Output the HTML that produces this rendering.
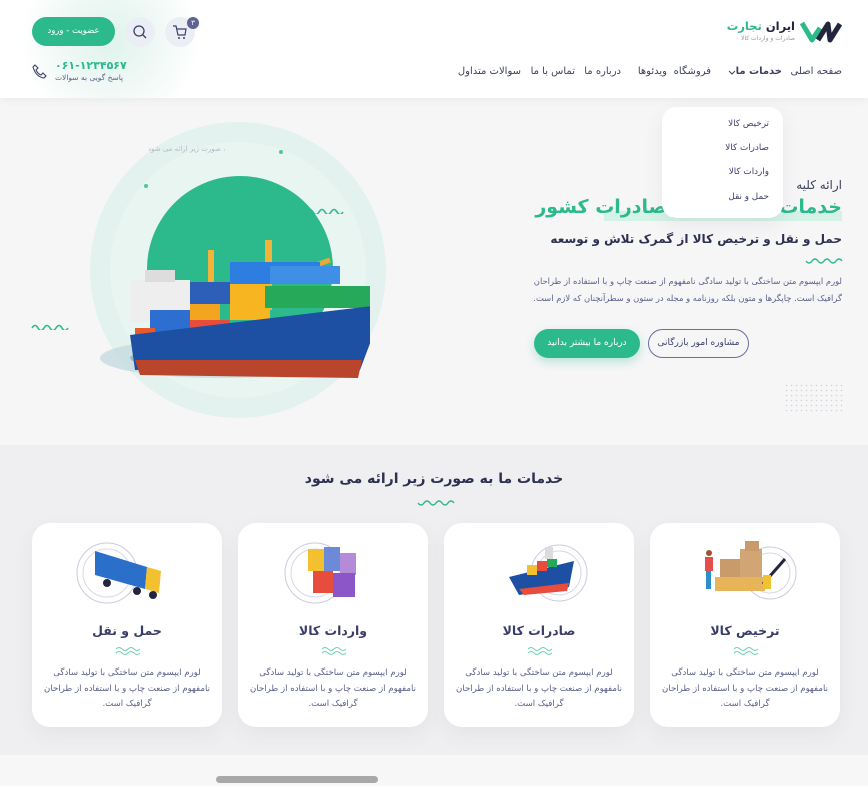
<!DOCTYPE html>
<html><head><meta charset="utf-8"><style>
*{margin:0;padding:0;box-sizing:border-box}
body{width:868px;height:786px;overflow:hidden;background:#f6f6f7;font-family:"DejaVu Sans","Liberation Sans",sans-serif;color:#3c3f5e;position:relative}
.a{position:absolute}
.t{white-space:nowrap}
.r{direction:rtl}
header{position:absolute;left:0;top:0;width:868px;height:98px;background:#fff;box-shadow:0 2px 8px rgba(0,0,0,.05)}
.nav{font-size:10px;color:#3c3f5e;top:66px}
.card{position:absolute;top:523px;width:190px;height:204px;background:#fff;border-radius:18px;box-shadow:0 8px 20px rgba(60,60,90,.06);text-align:center;direction:rtl}
.card h3{position:absolute;top:100px;width:100%;font-size:12.5px;color:#3a3d6b;font-weight:bold}
.card p{position:absolute;top:143px;left:12px;right:12px;font-size:8.6px;line-height:15.5px;color:#5a5f8a}
.card svg.w{position:absolute;top:123px;left:83px}
.card svg.ill{position:absolute;top:16px;left:35px}
</style></head><body>
<!-- hero background shapes -->
<div class="a" style="left:90px;top:122px;width:296px;height:296px;border-radius:50%;background:#e3f2ee"></div>
<div class="a" style="left:110px;top:142px;width:256px;height:256px;border-radius:50%;background:#e9f5f1"></div>
<div class="a" style="left:147px;top:176px;width:186px;height:186px;border-radius:50%;background:#2cb98c"></div>
<div class="a t r" style="left:148px;top:145px;font-size:7px;color:#b5b8c4">، صورت زیر ارائه می شود</div>
<div class="a" style="left:279px;top:150px;width:4px;height:4px;border-radius:50%;background:#4fc79d"></div>
<div class="a" style="left:144px;top:184px;width:4px;height:4px;border-radius:50%;background:#4fc79d"></div>
<svg class="a" style="left:306px;top:206px" width="38" height="8"><path d="M1 6 Q4 1 7 6 T13 6 T19 6 T25 6 T31 6 T37 6" fill="none" stroke="#2cb98c" stroke-width="1.6"/></svg>
<svg class="a" style="left:31px;top:322px" width="38" height="8"><path d="M1 6 Q4 1 7 6 T13 6 T19 6 T25 6 T31 6 T37 6" fill="none" stroke="#2cb98c" stroke-width="1.6"/></svg>
<!-- ship -->
<svg class="a" style="left:90px;top:210px" width="280" height="180">
<ellipse cx="130" cy="148" rx="120" ry="20" fill="#bfd9de" opacity=".7"/>
<ellipse cx="130" cy="148" rx="90" ry="12" fill="#6ea4b3" opacity=".6"/>
<rect x="40" y="70" width="60" height="42" fill="#eee"/>
<rect x="55" y="60" width="30" height="12" fill="#ddd"/>
<rect x="118" y="40" width="6" height="60" fill="#f0b43c"/>
<rect x="175" y="30" width="7" height="70" fill="#f0b43c"/>
<path d="M185 70 L240 50" stroke="#e8a83a" stroke-width="5"/>
<rect x="60" y="100" width="40" height="40" fill="#2d6fd1"/>
<rect x="45" y="118" width="20" height="22" fill="#e85a2c"/>
<rect x="100" y="92" width="30" height="18" fill="#f3a51f"/>
<rect x="100" y="72" width="40" height="22" fill="#2e5fb8"/>
<rect x="140" y="72" width="40" height="38" fill="#f6b521"/>
<rect x="140" y="52" width="90" height="22" fill="#2e7de0"/>
<rect x="180" y="56" width="70" height="18" fill="#3f8fe6"/>
<rect x="175" y="76" width="110" height="22" fill="#27a95a"/>
<rect x="100" y="110" width="40" height="20" fill="#e74c3c"/>
<path d="M40 125 L290 95 L285 120 L270 160 L45 160 Z" fill="#1d4fa3"/>
<path d="M45 150 L272 150 L268 168 L50 165 Z" fill="#b8452c"/>
</svg>
<!-- right hero text -->
<div class="a t r" style="right:26px;top:178px;font-size:12px;color:#3c3f5e">ارائه کلیه</div>
<div class="a" style="left:604px;top:211px;width:238px;height:10px;background:#d4f2e6"></div>
<div class="a t r" style="right:26px;top:196px;font-size:19px;font-weight:bold;color:#2cb98c">خدمات بازرگانی و صادرات کشور</div>
<div class="a t r" style="right:26px;top:232px;font-size:12px;font-weight:bold;color:#2d3050">حمل و نقل و ترخیص کالا از گمرک تلاش و توسعه</div>
<svg class="a" style="left:805px;top:257px" width="38" height="8"><path d="M1 4 Q4 8 7 4 T13 4 T19 4 T25 4 T31 4 T37 4" fill="none" stroke="#2cb98c" stroke-width="1.4"/></svg>
<div class="a r t" style="right:26px;top:273px;font-size:8.4px;line-height:17px;color:#5a5f8a">لورم ایپسوم متن ساختگی با تولید سادگی نامفهوم از صنعت چاپ و با استفاده از طراحان<br>گرافیک است. چاپگرها و متون بلکه روزنامه و مجله در ستون و سطرآنچنان که لازم است.</div>
<div class="a t r" style="left:534px;top:329px;width:106px;height:29px;border-radius:15px;background:#2cb98c;color:#fff;font-size:9px;text-align:center;line-height:29px;box-shadow:0 4px 10px rgba(44,185,140,.3)">درباره ما بیشتر بدانید</div>
<div class="a t r" style="left:648px;top:329px;width:101px;height:29px;border-radius:15px;border:1px solid #6a6f9e;color:#3c3f6e;font-size:9px;text-align:center;line-height:27px">مشاوره امور بازرگانی</div>
<svg class="a" style="left:785px;top:384px" width="58" height="30"><defs><pattern id="d" width="5" height="5" patternUnits="userSpaceOnUse"><circle cx="1.5" cy="1.5" r=".8" fill="#d0d2dc"/></pattern></defs><rect width="58" height="30" fill="url(#d)"/></svg>
<!-- header -->
<header>
<div class="a" style="left:0;top:0;width:230px;height:98px;background:radial-gradient(circle at 110px 40px,#dff3ec 0,#eef8f5 45px,rgba(255,255,255,0) 90px)"></div>
<svg class="a" style="left:800px;top:20px" width="44" height="24"><path d="M2 3 L12 20 L20 8" fill="none" stroke="#2cb98c" stroke-width="5" stroke-linejoin="round"/><path d="M18 20 L28 4 L30 20 L40 4" fill="none" stroke="#23253f" stroke-width="5" stroke-linejoin="round"/></svg>
<div class="a t r" style="right:73px;top:19px;font-size:11.5px;font-weight:bold;color:#23253f">ایران <span style="color:#2cb98c">تجارت</span></div>
<div class="a t r" style="right:73px;top:35px;font-size:6px;color:#999">صادرات و واردات کالا</div>
<div class="a t r nav" style="right:26px">صفحه اصلی</div>
<div class="a t r nav" style="right:86px;font-weight:bold">خدمات ما</div>
<svg class="a" style="left:728px;top:70px" width="8" height="6"><path d="M1 1 L4 4 L7 1" fill="none" stroke="#3c3f5e" stroke-width="1"/></svg>
<div class="a t r nav" style="right:157px">فروشگاه</div>
<div class="a t r nav" style="right:201px">ویدئوها</div>
<div class="a t r nav" style="right:247px">درباره ما</div>
<div class="a t r nav" style="right:293px">تماس با ما</div>
<div class="a t r nav" style="right:347px">سوالات متداول</div>
<div class="a t r" style="left:32px;top:17px;width:83px;height:29px;border-radius:15px;background:#2cb98c;color:#fff;font-size:8.5px;text-align:center;line-height:29px">عضویت - ورود</div>
<div class="a" style="left:125px;top:17px;width:30px;height:30px;border-radius:50%;background:#eceef6"></div>
<svg class="a" style="left:132px;top:24px" width="16" height="16"><circle cx="7" cy="7" r="5" fill="none" stroke="#3c3f6e" stroke-width="1.3"/><path d="M11 11 L14 14" stroke="#3c3f6e" stroke-width="1.3"/></svg>
<div class="a" style="left:165px;top:17px;width:30px;height:30px;border-radius:50%;background:#eceef6"></div>
<svg class="a" style="left:172px;top:24px" width="16" height="16"><path d="M1 2 H4 L6 11 H13 L14 5 H5" fill="none" stroke="#3c3f6e" stroke-width="1.2"/><circle cx="7" cy="14" r="1" fill="#3c3f6e"/><circle cx="12" cy="14" r="1" fill="#3c3f6e"/></svg>
<div class="a t" style="left:187px;top:17px;width:12px;height:12px;border-radius:50%;background:#5f6394;color:#fff;font-size:7px;text-align:center;line-height:12px">۳</div>
<div class="a t" style="left:55px;top:59px;font-size:11px;font-weight:bold;color:#2cb98c">۰۶۱-۱۲۳۴۵۶۷</div>
<div class="a t r" style="left:55px;top:73px;font-size:7.5px;color:#5a5f8a">پاسخ گویی به سوالات</div>
<svg class="a" style="left:32px;top:64px" width="15" height="15"><path d="M3 1 L6 4 L4 6 Q6 10 9 11 L11 9 L14 12 L12 14 Q4 13 1 3 Z" fill="none" stroke="#3c3f6e" stroke-width="1.1"/></svg>
</header>
<!-- dropdown -->
<div class="a r" style="left:662px;top:107px;width:121px;height:111px;background:#fff;border-radius:14px;box-shadow:0 6px 20px rgba(60,60,90,.08);font-size:8.8px;color:#3c3f6e">
<div class="a t" style="right:14px;top:12px">ترخیص کالا</div>
<div class="a t" style="right:14px;top:36px">صادرات کالا</div>
<div class="a t" style="right:14px;top:60px">واردات کالا</div>
<div class="a t" style="right:14px;top:85px">حمل و نقل</div>
</div>
<!-- services -->
<div class="a" style="left:0;top:445px;width:868px;height:310px;background:#efeff1"></div>
<div class="a t r" style="left:0;width:868px;top:471px;text-align:center;font-size:14px;font-weight:bold;color:#2d3050">خدمات ما به صورت زیر ارائه می شود</div>
<svg class="a" style="left:417px;top:499px" width="38" height="8"><path d="M1 4 Q4 8 7 4 T13 4 T19 4 T25 4 T31 4 T37 4" fill="none" stroke="#2cb98c" stroke-width="1.4"/></svg>

<div class="card" style="left:650px">
<svg class="ill" width="120" height="66"><circle cx="85" cy="34" r="26" fill="none" stroke="#c9cbe0"/><circle cx="85" cy="34" r="20" fill="none" stroke="#d6d8e8"/><rect x="30" y="38" width="50" height="14" fill="#e7b45a"/><rect x="35" y="20" width="20" height="18" fill="#c99a6a"/><rect x="55" y="10" width="22" height="28" fill="#d2a574"/><rect x="60" y="2" width="14" height="10" fill="#c99a6a"/><path d="M78 45 L100 20" stroke="#23253f" stroke-width="3"/><rect x="78" y="36" width="8" height="14" fill="#f3c030"/><rect x="20" y="18" width="8" height="14" fill="#e74c4c"/><rect x="21" y="32" width="5" height="18" fill="#2c8fc9"/><circle cx="24" cy="14" r="3" fill="#a0522d"/></svg>
<h3>ترخیص کالا</h3>
<svg class="w" width="26" height="10"><path d="M1 3 Q4 0 7 3 T13 3 T19 3 T25 3 M1 7 Q4 4 7 7 T13 7 T19 7 T25 7" fill="none" stroke="#6fd2ae" stroke-width="1"/></svg>
<p>لورم ایپسوم متن ساختگی با تولید سادگی نامفهوم از صنعت چاپ و با استفاده از طراحان گرافیک است.</p>
</div>
<div class="card" style="left:444px">
<svg class="ill" width="120" height="66"><circle cx="80" cy="34" r="28" fill="none" stroke="#c9cbe0"/><circle cx="80" cy="34" r="22" fill="none" stroke="#d6d8e8"/><path d="M30 38 L95 22 L90 48 L40 56 Z" fill="#1d4fa3"/><path d="M40 50 L90 44 L88 52 L45 56 Z" fill="#e74c3c"/><rect x="48" y="26" width="10" height="10" fill="#f3c030"/><rect x="58" y="22" width="10" height="10" fill="#e74c3c"/><rect x="68" y="20" width="10" height="8" fill="#27a95a"/><rect x="66" y="8" width="8" height="12" fill="#ddd"/></svg>
<h3>صادرات کالا</h3>
<svg class="w" width="26" height="10"><path d="M1 3 Q4 0 7 3 T13 3 T19 3 T25 3 M1 7 Q4 4 7 7 T13 7 T19 7 T25 7" fill="none" stroke="#6fd2ae" stroke-width="1"/></svg>
<p>لورم ایپسوم متن ساختگی با تولید سادگی نامفهوم از صنعت چاپ و با استفاده از طراحان گرافیک است.</p>
</div>
<div class="card" style="left:238px">
<svg class="ill" width="120" height="66"><circle cx="42" cy="34" r="30" fill="none" stroke="#c9cbe0"/><circle cx="42" cy="34" r="24" fill="none" stroke="#d6d8e8"/><rect x="35" y="10" width="16" height="22" fill="#f3c030"/><rect x="51" y="8" width="16" height="24" fill="#6c8ad8"/><rect x="67" y="14" width="16" height="22" fill="#b58ad8"/><rect x="40" y="32" width="20" height="22" fill="#e74c3c"/><rect x="60" y="34" width="22" height="24" fill="#8a56c8"/></svg>
<h3>واردات کالا</h3>
<svg class="w" width="26" height="10"><path d="M1 3 Q4 0 7 3 T13 3 T19 3 T25 3 M1 7 Q4 4 7 7 T13 7 T19 7 T25 7" fill="none" stroke="#6fd2ae" stroke-width="1"/></svg>
<p>لورم ایپسوم متن ساختگی با تولید سادگی نامفهوم از صنعت چاپ و با استفاده از طراحان گرافیک است.</p>
</div>
<div class="card" style="left:32px">
<svg class="ill" width="120" height="66"><circle cx="40" cy="34" r="30" fill="none" stroke="#c9cbe0"/><circle cx="40" cy="34" r="24" fill="none" stroke="#d6d8e8"/><path d="M28 12 L80 28 L78 50 L28 36 Z" fill="#2a6fc9"/><path d="M80 28 L94 32 L92 54 L78 50 Z" fill="#f3c030"/><circle cx="40" cy="44" r="4" fill="#23253f"/><circle cx="70" cy="52" r="4" fill="#23253f"/><circle cx="86" cy="56" r="4" fill="#23253f"/></svg>
<h3>حمل و نقل</h3>
<svg class="w" width="26" height="10"><path d="M1 3 Q4 0 7 3 T13 3 T19 3 T25 3 M1 7 Q4 4 7 7 T13 7 T19 7 T25 7" fill="none" stroke="#6fd2ae" stroke-width="1"/></svg>
<p>لورم ایپسوم متن ساختگی با تولید سادگی نامفهوم از صنعت چاپ و با استفاده از طراحان گرافیک است.</p>
</div>
<div class="a" style="left:0;top:755px;width:868px;height:31px;background:#f7f7f7"></div>
<div class="a" style="left:216px;top:776px;width:162px;height:7px;border-radius:4px;background:#a8a8a8"></div>
</body></html>
